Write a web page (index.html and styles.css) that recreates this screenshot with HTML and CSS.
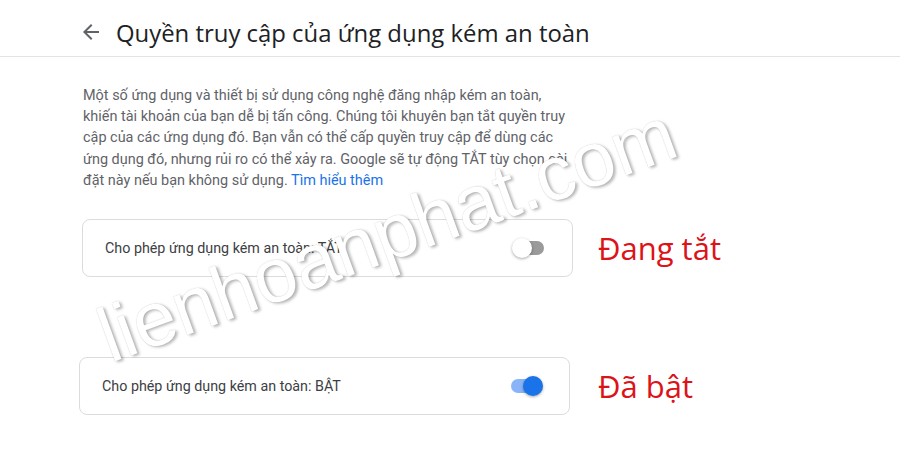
FILE: index.html
```html
<!DOCTYPE html>
<html lang="vi">
<head>
<meta charset="utf-8">
<title>Quyền truy cập của ứng dụng kém an toàn</title>
<link rel="stylesheet" href="styles.css">
</head>
<body>
<div class="page">
  <header class="header">
    <svg class="back" viewBox="0 0 24 24" width="24" height="24"><path d="M20 11H7.83l5.59-5.59L12 4l-8 8 8 8 1.41-1.41L7.83 13H20v-2z" fill="#5f6368"/></svg>
    <h1 class="title">Quyền truy cập của ứng dụng kém an toàn</h1>
  </header>
  <main class="content">
    <p class="desc">Một số ứng dụng và thiết bị sử dụng công nghệ đăng nhập kém an toàn,<br>khiến tài khoản của bạn dễ bị tấn công. Chúng tôi khuyên bạn tắt quyền truy<br>cập của các ứng dụng đó. Bạn vẫn có thể cấp quyền truy cập để dùng các<br>ứng dụng đó, nhưng rủi ro có thể xảy ra. Google sẽ tự động TẮT tùy chọn cài<br>đặt này nếu bạn không sử dụng. <a class="link" href="#">Tìm hiểu thêm</a></p>
    <div class="row row-off">
      <div class="card">
        <span class="card-text">Cho phép ứng dụng kém an toàn: TẮT</span>
        <span class="toggle off"><span class="thumb"></span></span>
      </div>
      <span class="note">Đang tắt</span>
    </div>
    <div class="row row-on">
      <div class="card">
        <span class="card-text">Cho phép ứng dụng kém an toàn: BẬT</span>
        <span class="toggle on"><span class="thumb"></span></span>
      </div>
      <span class="note">Đã bật</span>
    </div>
  </main>
  <div class="watermark">lienhoanphat.com</div>
</div>
</body>
</html>
```
FILE: styles.css
```css
html, body {
  margin: 0;
  padding: 0;
  background: #fff;
}
.page {
  position: relative;
  width: 900px;
  height: 453px;
  overflow: hidden;
  font-family: Roboto, "Liberation Sans", sans-serif;
}
.header {
  height: 56px;
  border-bottom: 1px solid #e3e3e3;
  display: flex;
  align-items: center;
  padding-left: 79px;
}
.back {
  display: block;
  margin-top: 8px;
}
.title {
  margin: 0 0 0 13px;
  padding-top: 8px;
  font-family: "Open Sans", Roboto, sans-serif;
  font-weight: 400;
  font-size: 23.9px;
  color: #202124;
}
.content {
  padding-left: 83px;
  padding-top: 28px;
}
.desc {
  margin: 0;
  font-size: 14.45px;
  line-height: 21.2px;
  color: #5f6368;
}
.link {
  color: #1a73e8;
  text-decoration: none;
}
.row {
  display: flex;
  align-items: center;
}
.row-off {
  margin-top: 28px;
  margin-left: -1px;
}
.row-on {
  margin-top: 80px;
  margin-left: -4px;
}
.card {
  width: 491px;
  height: 58px;
  border: 1px solid #dadce0;
  border-radius: 8px;
  display: flex;
  align-items: center;
  justify-content: space-between;
  padding: 0 28px 0 22px;
  box-sizing: border-box;
}
.card-text {
  font-size: 14.3px;
  color: #3c4043;
}
.toggle {
  position: relative;
  width: 30px;
  height: 14px;
  border-radius: 7px;
}
.toggle.off {
  background: #9a9a9a;
}
.toggle.on {
  background: #8ab4f8;
}
.thumb {
  position: absolute;
  top: -3px;
  width: 20px;
  height: 20px;
  border-radius: 50%;
  box-shadow: 0 1px 3px rgba(0,0,0,0.35);
}
.off .thumb {
  left: -2px;
  background: #fff;
}
.on .thumb {
  right: -2px;
  background: #1a73e8;
}
.note {
  margin-left: 25px;
  font-family: "Open Sans", sans-serif;
  font-size: 31px;
  color: #dc1319;
  line-height: 1;
}
.row-on .note {
  margin-left: 28px;
}
.watermark {
  position: absolute;
  left: 88px;
  top: 302px;
  transform: rotate(-20deg);
  transform-origin: 0 0;
  font-family: "Liberation Sans", Arial, sans-serif;
  font-size: 77px;
  line-height: 1;
  color: #fff;
  white-space: nowrap;
  text-shadow: 2px 2px 3px rgba(0,0,0,0.28), 0 0 1px rgba(0,0,0,0.25);
  pointer-events: none;
}
```
